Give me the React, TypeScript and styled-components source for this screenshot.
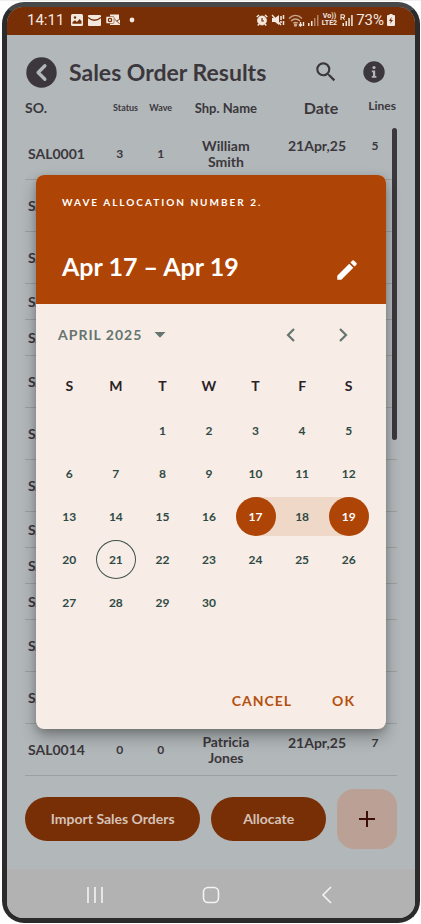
import React from "react";
import styled, { createGlobalStyle } from "styled-components";

const INK = "#3b373d";
const RUST = "#ae4406";
const RUST_DIM = "#782f05";
const SURFACE = "#b2b7b9";
const STATUS_INK = "#f3e8e0";
const BAND = "#f0d8c9";

const GlobalStyle = createGlobalStyle`
  *, *::before, *::after { box-sizing: border-box; }
  body { margin: 0; background: #fefefe; font-family: Lato, "Noto Sans", sans-serif; color: ${INK}; }
  button { font: inherit; color: inherit; border: 0; padding: 0; background: none; cursor: pointer; }
  h1, h2, p { margin: 0; }
  svg { display: block; flex: none; }
`;

const Page = styled.div`
  display: flex;
  min-height: 100vh;
  padding: 1px 1px 1px 2px;
  border-top: 1px solid #efefef;
`;

const Phone = styled.div`
  flex: 1;
  display: flex;
  flex-direction: column;
  min-width: 0;
  border: 5px solid #2b2b2b;
  border-top-color: #464748;
  border-radius: 22px;
  background: #2b2b2b;
`;

const Screen = styled.div`
  flex: 1;
  display: flex;
  flex-direction: column;
  border-radius: 16px;
  overflow: hidden;
  background: ${SURFACE};
`;

const StatusBar = styled.header`
  display: flex;
  align-items: center;
  justify-content: space-between;
  height: 28px;
  padding: 0 20px 2px;
  background: ${RUST_DIM};
  color: ${STATUS_INK};
  font: 15px/20px Roboto, sans-serif;
`;

const StatusGroup = styled.div<{ $gap: number }>`
  display: flex;
  align-items: center;
  gap: ${(p) => p.$gap}px;
`;

const Clock = styled.span`
  margin-right: 2px;
`;

const Network = styled.span`
  font: 700 7px/7px Roboto, sans-serif;
  text-align: center;
`;

const Main = styled.main`
  position: relative;
  flex: 1;
  display: flex;
  flex-direction: column;
  padding: 19px 18px 20px;
`;

const TitleBar = styled.div`
  display: flex;
  align-items: center;
  height: 36px;
  padding: 0 12px 0 1px;
`;

const Title = styled.h1`
  flex: 1;
  margin-left: 12px;
  font-size: 23px;
  line-height: 32px;
  font-weight: 700;
  white-space: nowrap;
`;

const IconButton = styled.button`
  display: flex;
  align-items: center;
  justify-content: center;
`;

const EditButton = styled(IconButton)`
  margin-top: 8px;
`;

const TitleActions = styled.div`
  display: flex;
  align-items: center;
  gap: 24px;
`;

const ListArea = styled.div`
  position: relative;
  flex: 1 1 0;
  min-height: 0;
  height: 0;
  overflow: hidden;
`;

const Orders = styled.table`
  width: 100%;
  border-collapse: collapse;
  table-layout: fixed;
`;

const Column = styled.col<{ $share: number }>`
  width: ${(p) => p.$share}%;
`;

const HeadCell = styled.th<{ $size: number; $align?: string; $pad?: string }>`
  height: 37px;
  padding: ${(p) => p.$pad ?? "0 0 2px"};
  font-size: ${(p) => p.$size}px;
  line-height: 20px;
  font-weight: 700;
  text-align: ${(p) => p.$align ?? "center"};
  vertical-align: middle;
  white-space: nowrap;
`;

const OrderRow = styled.tr<{ $tall: boolean }>`
  height: ${(p) => (p.$tall ? 52 : 36)}px;
  border-bottom: 1px solid #9a9fa1;
`;

const Cell = styled.td`
  padding: 2px 0 0;
  font-size: 14px;
  line-height: 16px;
  font-weight: 700;
  text-align: center;
  vertical-align: middle;
`;

const IdCell = styled(Cell)`
  padding-left: 3px;
  text-align: left;
`;

const CountCell = styled(Cell)`
  font-size: 12px;
`;

const DateCell = styled(Cell)`
  padding-top: 11px;
  vertical-align: top;
`;

const LinesCell = styled(DateCell)`
  padding-right: 14px;
  font-size: 12px;
`;

const NameText = styled.div`
  width: 64px;
  margin: 0 auto;
`;

const ScrollThumb = styled.div`
  position: absolute;
  top: 38px;
  right: 0;
  width: 5px;
  height: 312px;
  border-radius: 3px;
  background: ${INK};
`;

const BottomActions = styled.div`
  display: flex;
  align-items: center;
  gap: 11px;
`;

const PillButton = styled.button<{ $grow: number }>`
  flex: ${(p) => p.$grow} 1 0;
  height: 44px;
  border-radius: 22px;
  background: ${RUST_DIM};
  color: #d5c2b8;
  font-size: 14px;
  line-height: 20px;
  font-weight: 700;
  white-space: nowrap;
`;

const AddButton = styled(IconButton)`
  width: 60px;
  height: 60px;
  border-radius: 17px;
  background: #bba095;
  color: #3c0d0b;
`;

const NavBar = styled.nav`
  display: flex;
  align-items: center;
  justify-content: space-around;
  height: 49px;
  padding: 2px 30px 0;
  background: #b2b2b2;
  color: #f4f4f4;
`;

const Overlay = styled.div`
  position: absolute;
  inset: 0;
  display: flex;
  align-items: center;
  padding: 0 29px;
`;

const Dialog = styled.section`
  flex: 1;
  border-radius: 8px;
  overflow: hidden;
  background: #f7ece6;
  box-shadow: 0 8px 16px rgba(0, 0, 0, 0.3), 0 2px 6px rgba(0, 0, 0, 0.15);
`;

const DialogHead = styled.header`
  display: flex;
  flex-direction: column;
  justify-content: space-between;
  height: 129px;
  padding: 19px 26px 20px;
  background: ${RUST};
  color: #fff;
`;

const Kicker = styled.p`
  font-size: 10px;
  line-height: 16px;
  font-weight: 700;
  letter-spacing: 2px;
`;

const RangeRow = styled.div`
  display: flex;
  align-items: center;
  justify-content: space-between;
`;

const RangeText = styled.h2`
  font-size: 25px;
  line-height: 36px;
  font-weight: 700;
`;

const MonthRow = styled.div`
  display: flex;
  align-items: center;
  justify-content: space-between;
  padding: 20px 33px 0 22px;
  color: #64756f;
`;

const MonthButton = styled.button`
  display: flex;
  align-items: center;
  gap: 12px;
  font-size: 14px;
  line-height: 22px;
  font-weight: 700;
  letter-spacing: 1px;
`;

const MonthArrows = styled.div`
  display: flex;
  gap: 32px;
`;

const Calendar = styled.table`
  width: calc(100% - 24px);
  margin: 19px 14px 0 10px;
  border-collapse: collapse;
  table-layout: fixed;
`;

const Weekday = styled.th`
  height: 44px;
  padding: 0 0 3px;
  font-size: 14px;
  font-weight: 700;
  color: #2a2226;
`;

const bandFill = {
  none: "none",
  start: `linear-gradient(to right, transparent 50%, ${BAND} 50%)`,
  mid: `linear-gradient(${BAND}, ${BAND})`,
  end: `linear-gradient(to left, transparent 50%, ${BAND} 50%)`,
};

const DayCell = styled.td<{ $band: keyof typeof bandFill }>`
  height: 43px;
  padding: 2px 0;
  background: ${(p) => bandFill[p.$band]};
  background-clip: content-box;
`;

const Day = styled.button<{ $picked?: boolean; $today?: boolean }>`
  display: block;
  width: 40px;
  height: 39px;
  margin: 0 auto;
  border-radius: 50%;
  border: ${(p) => (p.$today ? "1px solid #3f534c" : "0")};
  background: ${(p) => (p.$picked ? RUST : "none")};
  color: ${(p) => (p.$picked ? "#fff" : "#2f4a44")};
  font-size: 12px;
  line-height: 16px;
  font-weight: 700;
`;

const DialogActions = styled.footer`
  display: flex;
  justify-content: flex-end;
  gap: 40px;
  padding: 66px 31px 17px;
`;

const TextButton = styled.button`
  color: #b5500f;
  font-size: 14px;
  line-height: 22px;
  font-weight: 700;
  letter-spacing: 1px;
`;

type Order = {
  id?: string;
  tall?: boolean;
  status?: string;
  wave?: string;
  name?: string;
  date?: string;
  lines?: string;
};

const orders: Order[] = [
  { id: "SAL0001", tall: true, status: "3", wave: "1", name: "William Smith", date: "21Apr,25", lines: "5" },
  { id: "SAL0002", tall: true },
  { id: "SAL0003", tall: true },
  { id: "SAL0004" },
  { id: "SAL0005" },
  { id: "SAL0006", tall: true },
  { id: "SAL0007", tall: true },
  { id: "SAL0008", tall: true },
  { id: "SAL0009" },
  { id: "SAL0010" },
  { id: "SAL0011" },
  { id: "SAL0012", tall: true },
  { id: "SAL0013", tall: true },
  { id: "SAL0014", tall: true, status: "0", wave: "0", name: "Patricia Jones", date: "21Apr,25", lines: "7" },
  { tall: true, name: "Michael Brown" },
];

const weeks: (number | null)[][] = Array.from({ length: 5 }, (_, w) =>
  Array.from({ length: 7 }, (_, d) => {
    const day = w * 7 + d - 1;
    return day >= 1 && day <= 30 ? day : null;
  })
);

const rangeStart = 17;
const rangeEnd = 19;
const today = 21;

const bandOf = (d: number | null): keyof typeof bandFill => {
  if (d === null || d < rangeStart || d > rangeEnd) return "none";
  if (d === rangeStart) return "start";
  return d === rangeEnd ? "end" : "mid";
};

const StatusLeft = () => (
  <StatusGroup $gap={5}>
    <Clock>14:11</Clock>
    <svg width="12" height="12" viewBox="0 0 12 12">
      <rect width="12" height="12" rx="1.5" fill={STATUS_INK} />
      <path d="M1.5 9.800V8L4 6.200 6 8l2.500-3L10.500 7v2.800z" fill={RUST_DIM} />
      <circle cx="4" cy="3.500" r="1.200" fill={RUST_DIM} />
    </svg>
    <svg width="13" height="11" viewBox="0 0 13 11">
      <rect width="13" height="11" rx="1" fill={STATUS_INK} />
      <path d="M0 2.500Q6.500 8 13 2.500" fill="none" stroke={RUST_DIM} strokeWidth="1.300" />
    </svg>
    <svg width="14" height="12" viewBox="0 0 14 12">
      <path fill={STATUS_INK} d="M4 .5h9v4l1 1V11H4z" />
      <rect y="2.500" width="8" height="7" rx="1" fill={STATUS_INK} stroke={RUST_DIM} strokeWidth=".5" />
      <circle cx="4" cy="6" r="1.700" fill="none" stroke={RUST_DIM} strokeWidth="1.200" />
      <path d="M8.500 5l2.200 2L14 5M10.700 7l3 3" fill="none" stroke={RUST_DIM} strokeWidth=".9" />
    </svg>
    <svg width="14" height="6" viewBox="0 0 14 6">
      <circle cx="7" cy="3" r="2.400" fill={STATUS_INK} />
    </svg>
  </StatusGroup>
);

const StatusRight = () => (
  <StatusGroup $gap={3}>
    <svg width="12" height="12" viewBox="0 0 12 12" fill="none" stroke={STATUS_INK}>
      <circle cx="6" cy="6.500" r="4.400" fill={STATUS_INK} />
      <path d="M.7 3L3 1M11.300 3L9 1M3 10l-1.200 1.500M9 10l1.200 1.500" strokeWidth="1.500" />
      <path d="M6 4v3h2" stroke={RUST_DIM} strokeWidth="1.200" />
    </svg>
    <svg width="14" height="12" viewBox="0 0 14 12" fill="none" stroke={STATUS_INK}>
      <path d="M1 4h3L8 1v10L4 8H1z" fill={STATUS_INK} stroke="none" />
      <path d="M1 1l9 10" strokeWidth="1.400" />
      <path d="M10 2v4M12.500 1v4M12.500 7v4M10 7v2" strokeWidth="1.500" />
    </svg>
    <svg width="17" height="13" viewBox="0 0 17 13" fill="none" stroke="#c9a893" strokeWidth="1.400">
      <path d="M1 4.500C5 .5 10 .5 14 4.500M3 7c3-2.700 6-2.700 9 0M5.300 9.300c1.500-1.200 3-1.200 4.500 0" />
      <circle cx="7.500" cy="11" r="1" fill="#c9a893" />
      <path d="M12.500 8v4M11 10.500l1.500 1.500 1.500-1.500M15.500 12V8" stroke={STATUS_INK} />
    </svg>
    <svg width="11" height="11" viewBox="0 0 11 11">
      <path fill={STATUS_INK} d="M0 8h1.500v3H0zM3 6h1.500v5H3z" />
      <path fill="#b48467" d="M6 3h1.500v8H6zM9 0h1.500v11H9z" />
    </svg>
    <Network>Vo))<br />LTE2</Network>
    <svg width="13" height="13" viewBox="0 0 13 13" fill={STATUS_INK}>
      <path d="M1 6V.8h2.200a1.300 1.300 0 0 1 0 2.700H1M3 3.500L4.500 6" fill="none" stroke={STATUS_INK} strokeWidth="1.100" />
      <path d="M2.500 9H4v3H2.500zM5.500 7H7v5H5.500zM8.300 4h1.500v8H8.300zM11.200 1h1.500v11h-1.500z" />
    </svg>
    <span>73%</span>
    <svg width="8" height="12" viewBox="0 0 8 12">
      <path fill={STATUS_INK} d="M2.500 0h3v1H7a1 1 0 0 1 1 1v9a1 1 0 0 1-1 1H1a1 1 0 0 1-1-1V2a1 1 0 0 1 1-1h1.500z" />
      <path fill={RUST_DIM} d="M4.500 3L2 7h1.700L3.300 9.800 6 6H4.200z" />
    </svg>
  </StatusGroup>
);

export default function App() {
  return (
    <>
      <GlobalStyle />
      <Page>
        <Phone>
          <Screen>
            <StatusBar>
              <StatusLeft />
              <StatusRight />
            </StatusBar>
            <Main>
              <TitleBar>
                <IconButton aria-label="Back">
                  <svg width="31" height="31" viewBox="0 0 32 32" fill="none">
                    <circle cx="16" cy="16" r="15.700" fill={INK} />
                    <path d="M19.500 9L12.500 16l7 7" stroke={SURFACE} strokeWidth="3.400" strokeLinecap="round" strokeLinejoin="round" />
                  </svg>
                </IconButton>
                <Title>Sales Order Results</Title>
                <TitleActions>
                  <IconButton aria-label="Search">
                    <svg width="26" height="26" viewBox="0 0 24 24" fill={INK}>
                      <path d="M15.500 14h-.79l-.28-.27A6.470 6.470 0 0 0 16 9.500 6.500 6.500 0 1 0 9.500 16c1.610 0 3.090-.59 4.230-1.570l.27.28v.79l5 4.990L20.490 19l-4.990-5zm-6 0C7.010 14 5 11.990 5 9.500S7.010 5 9.500 5 14 7.010 14 9.500 11.990 14 9.500 14z" />
                    </svg>
                  </IconButton>
                  <IconButton aria-label="Information">
                    <svg width="22" height="22" viewBox="0 0 22 22">
                      <circle cx="11" cy="11" r="10.700" fill={INK} />
                      <circle cx="11" cy="6.500" r="1.600" fill={SURFACE} />
                      <path d="M8.800 9.500h3.400v5.500h1.200v1.700H8.800V15H10v-3.800H8.800z" fill={SURFACE} />
                    </svg>
                  </IconButton>
                </TitleActions>
              </TitleBar>
              <ListArea>
                <Orders>
                  <colgroup>
                    <Column $share={21} />
                    <Column $share={9} />
                    <Column $share={13} />
                    <Column $share={22} />
                    <Column $share={27} />
                    <Column $share={8} />
                  </colgroup>
                  <thead>
                    <tr>
                      <HeadCell $size={14} $align="left">SO.</HeadCell>
                      <HeadCell $size={9} $pad="0 0 2px 10px">Status</HeadCell>
                      <HeadCell $size={9}>Wave</HeadCell>
                      <HeadCell $size={13}>Shp. Name</HeadCell>
                      <HeadCell $size={16} $pad="0 0 2px 8px">Date</HeadCell>
                      <HeadCell $size={12} $align="right" $pad="0 1px 6px 0">Lines</HeadCell>
                    </tr>
                  </thead>
                  <tbody>
                    {orders.map((o, i) => (
                      <OrderRow key={i} $tall={!!o.tall}>
                        <IdCell>{o.id}</IdCell>
                        <CountCell>{o.status}</CountCell>
                        <CountCell>{o.wave}</CountCell>
                        <Cell><NameText>{o.name}</NameText></Cell>
                        <DateCell>{o.date}</DateCell>
                        <LinesCell>{o.lines}</LinesCell>
                      </OrderRow>
                    ))}
                  </tbody>
                </Orders>
                <ScrollThumb />
              </ListArea>
              <BottomActions>
                <PillButton $grow={176}>Import Sales Orders</PillButton>
                <PillButton $grow={115}>Allocate</PillButton>
                <AddButton aria-label="Add">
                  <svg width="16" height="16" viewBox="0 0 16 16"><path d="M8 0v16M0 8h16" stroke="currentColor" strokeWidth="2" /></svg>
                </AddButton>
              </BottomActions>
              <Overlay>
                <Dialog role="dialog" aria-label="Wave allocation dates">
                  <DialogHead>
                    <Kicker>WAVE ALLOCATION NUMBER 2.</Kicker>
                    <RangeRow>
                      <RangeText>Apr 17 – Apr 19</RangeText>
                      <EditButton as="button" aria-label="Edit dates">
                        <svg width="26" height="26" viewBox="0 0 24 24" fill="#fff">
                          <path d="M3 17.250V21h3.750L17.810 9.940l-3.750-3.750L3 17.250zM20.710 7.040a1 1 0 0 0 0-1.410l-2.340-2.340a1 1 0 0 0-1.410 0l-1.830 1.830 3.750 3.750 1.830-1.830z" />
                        </svg>
                      </EditButton>
                    </RangeRow>
                  </DialogHead>
                  <MonthRow>
                    <MonthButton>
                      APRIL 2025
                      <svg width="12" height="6" viewBox="0 0 12 6"><path d="M.5 0h11L6 5.800z" fill="currentColor" /></svg>
                    </MonthButton>
                    <MonthArrows>
                      <IconButton aria-label="Previous month">
                        <svg width="20" height="14" viewBox="0 0 20 14" fill="none" stroke="currentColor" strokeWidth="2.200"><path d="M13 1L7 7l6 6" /></svg>
                      </IconButton>
                      <IconButton aria-label="Next month">
                        <svg width="20" height="14" viewBox="0 0 20 14" fill="none" stroke="currentColor" strokeWidth="2.200"><path d="M7 1l6 6-6 6" /></svg>
                      </IconButton>
                    </MonthArrows>
                  </MonthRow>
                  <Calendar>
                    <thead>
                      <tr>{["S", "M", "T", "W", "T", "F", "S"].map((d, i) => <Weekday key={i}>{d}</Weekday>)}</tr>
                    </thead>
                    <tbody>
                      {weeks.map((week, w) => (
                        <tr key={w}>
                          {week.map((d, i) => (
                            <DayCell key={i} $band={bandOf(d)}>
                              {d && <Day $picked={d === rangeStart || d === rangeEnd} $today={d === today}>{d}</Day>}
                            </DayCell>
                          ))}
                        </tr>
                      ))}
                    </tbody>
                  </Calendar>
                  <DialogActions>
                    <TextButton>CANCEL</TextButton>
                    <TextButton>OK</TextButton>
                  </DialogActions>
                </Dialog>
              </Overlay>
            </Main>
            <NavBar>
              <IconButton aria-label="Recent apps">
                <svg width="18" height="18" viewBox="0 0 18 18" stroke="currentColor" strokeWidth="1.600"><path d="M2 1v16M9 1v16M16 1v16" /></svg>
              </IconButton>
              <IconButton aria-label="Home">
                <svg width="18" height="18" viewBox="0 0 18 18" fill="none" stroke="currentColor" strokeWidth="1.600"><rect x="1.500" y="1.500" width="15" height="15" rx="4.500" /></svg>
              </IconButton>
              <IconButton aria-label="Back">
                <svg width="18" height="18" viewBox="0 0 18 18" fill="none" stroke="currentColor" strokeWidth="1.600"><path d="M13 1L5 9l8 8" /></svg>
              </IconButton>
            </NavBar>
          </Screen>
        </Phone>
      </Page>
    </>
  );
}
